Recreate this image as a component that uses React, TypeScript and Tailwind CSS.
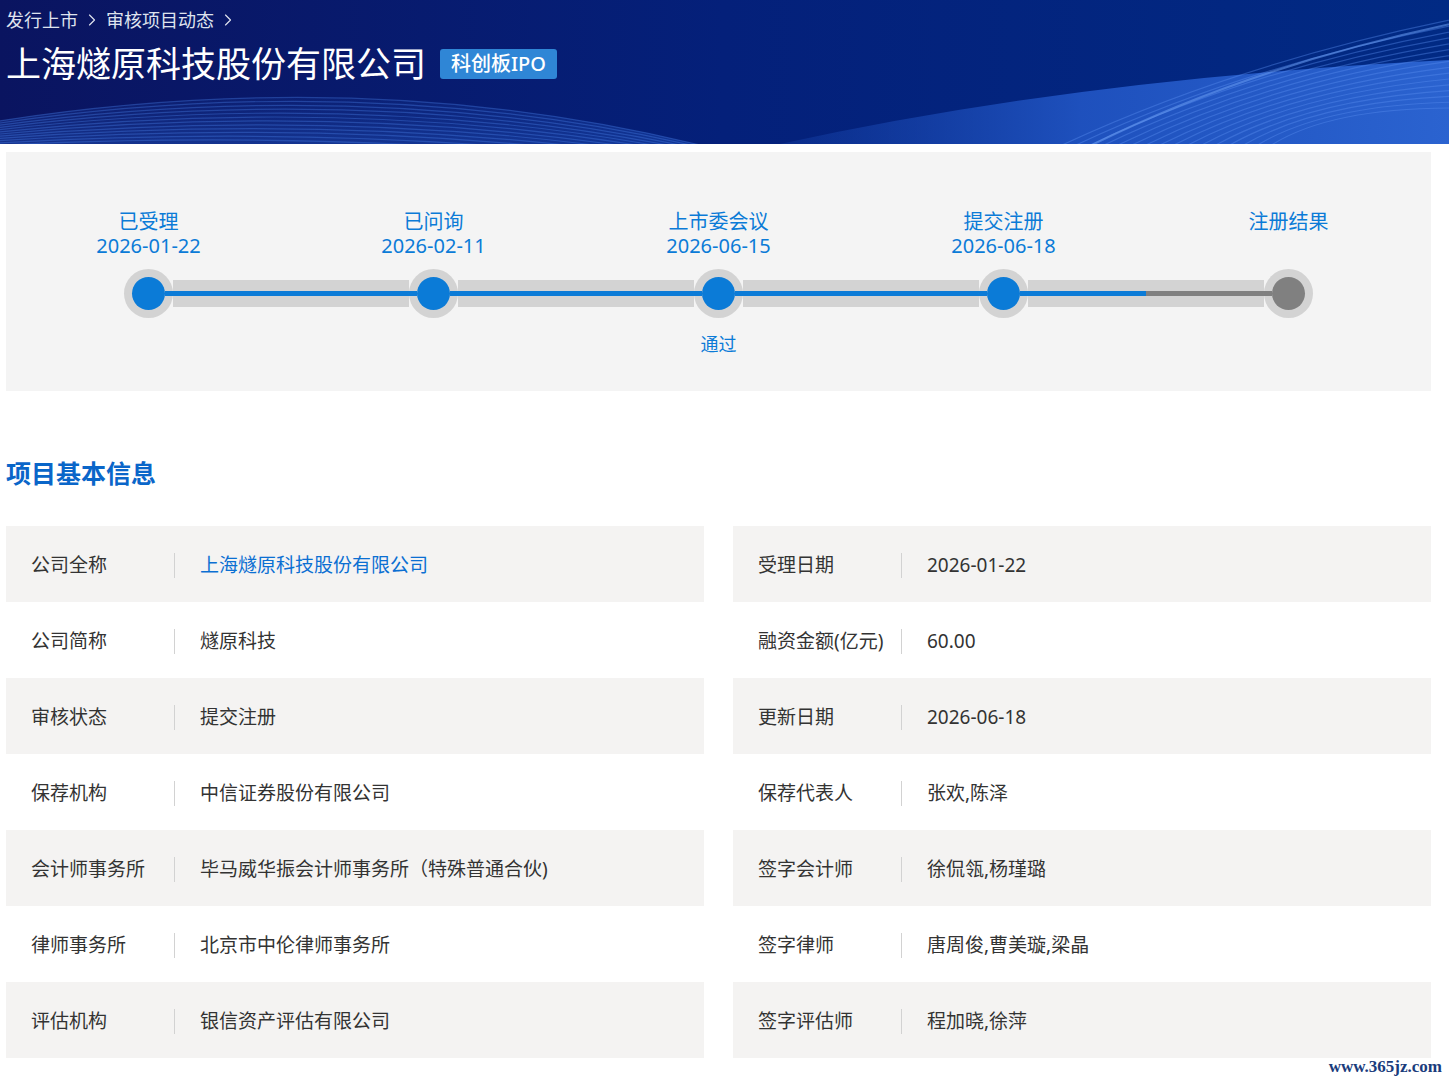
import React from 'react';
import { ChevronRight } from 'lucide-react';

type Step = { name: string; date?: string; note?: string; done: boolean };

const steps: Step[] = [
  { name: '已受理', date: '2026-01-22', done: true },
  { name: '已问询', date: '2026-02-11', done: true },
  { name: '上市委会议', date: '2026-06-15', note: '通过', done: true },
  { name: '提交注册', date: '2026-06-18', done: true },
  { name: '注册结果', done: false },
];

type Cell = { label: string; value: string; link?: boolean };

const rows: [Cell, Cell][] = [
  [
    { label: '公司全称', value: '上海燧原科技股份有限公司', link: true },
    { label: '受理日期', value: '2026-01-22' },
  ],
  [
    { label: '公司简称', value: '燧原科技' },
    { label: '融资金额(亿元)', value: '60.00' },
  ],
  [
    { label: '审核状态', value: '提交注册' },
    { label: '更新日期', value: '2026-06-18' },
  ],
  [
    { label: '保荐机构', value: '中信证券股份有限公司' },
    { label: '保荐代表人', value: '张欢,陈泽' },
  ],
  [
    { label: '会计师事务所', value: '毕马威华振会计师事务所（特殊普通合伙)' },
    { label: '签字会计师', value: '徐侃瓴,杨瑾璐' },
  ],
  [
    { label: '律师事务所', value: '北京市中伦律师事务所' },
    { label: '签字律师', value: '唐周俊,曹美璇,梁晶' },
  ],
  [
    { label: '评估机构', value: '银信资产评估有限公司' },
    { label: '签字评估师', value: '程加晓,徐萍' },
  ],
];

const HeaderWaves = () => {
  const left = Array.from({ length: 12 }, (_, i) => i);
  const right = Array.from({ length: 16 }, (_, i) => i);
  return (
    <svg
      className="absolute inset-0 h-full w-full"
      viewBox="0 0 1449 144"
      preserveAspectRatio="none"
    >
      <defs>
        <linearGradient id="sweep" x1="0" y1="0" x2="1" y2="0">
          <stop offset="0" stopColor="#1c4cb8" stopOpacity="0.25" />
          <stop offset="0.45" stopColor="#2358c8" stopOpacity="0.85" />
          <stop offset="1" stopColor="#2d66d4" stopOpacity="0.95" />
        </linearGradient>
        <linearGradient id="hump" x1="0" y1="0" x2="0" y2="1">
          <stop offset="0" stopColor="#1d46a8" stopOpacity="0.15" />
          <stop offset="1" stopColor="#2150b8" stopOpacity="0.55" />
        </linearGradient>
      </defs>
      <path d="M -20 124 Q 370 60 720 150 L -20 150 Z" fill="url(#hump)" />
      {left.map((i) => (
        <path
          key={`l${i}`}
          d={`M -20 ${124 + i * 2} Q 370 ${60 + i * 6} 720 ${150 + i * 2}`}
          fill="none"
          stroke="#4378de"
          strokeOpacity={0.4}
          strokeWidth={1.2}
        />
      ))}
      <path d="M 780 144 Q 1080 78 1449 60 L 1449 144 Z" fill="url(#sweep)" />
      {right.map((i) => (
        <path
          key={`r${i}`}
          d={`M ${1060 + i * 14} 146 Q ${1240 + i * 6} ${62 + i * 3} 1460 ${18 + i * 6}`}
          fill="none"
          stroke="#5a8ff0"
          strokeOpacity={0.4}
          strokeWidth={1.2}
        />
      ))}
      <path
        d="M 1090 146 Q 1250 66 1460 22"
        fill="none"
        stroke="#6a9df2"
        strokeOpacity={0.55}
        strokeWidth={2}
      />
    </svg>
  );
};

const lineColor = (done: boolean) => (done ? 'bg-[#0b7bd7]' : 'bg-[#808080]');

const Timeline = () => (
  <div className="mx-[6px] mt-2 w-[1425px] bg-[#f4f4f4] pt-[58px] pb-[35px]">
    <div className="grid grid-cols-5">
      {steps.map((s, i) => {
        const first = i === 0;
        const last = i === steps.length - 1;
        return (
          <div key={s.name} className="flex flex-col items-center text-[#0b7bd7]">
            <div className="h-[24px] text-[20px] leading-[24px]">{s.name}</div>
            <div className="h-[24px] text-[20px] leading-[24px]">{s.date}</div>
            <div className="mt-[11px] flex h-[49px] w-full items-center">
              <div className={`flex h-[27px] flex-1 items-center ${first ? '' : 'bg-[#d3d3d3]'}`}>
                {!first && <div className={`h-[5px] w-full ${lineColor(s.done)}`} />}
              </div>
              <div className="flex h-[49px] w-[49px] items-center rounded-full bg-[#d3d3d3]">
                <div className={`h-[5px] flex-1 ${first ? '' : lineColor(s.done)}`} />
                <div className={`h-[33px] w-[33px] shrink-0 rounded-full ${lineColor(s.done)}`} />
                <div className={`h-[5px] flex-1 ${last ? '' : lineColor(s.done)}`} />
              </div>
              <div className={`flex h-[27px] flex-1 items-center ${last ? '' : 'bg-[#d3d3d3]'}`}>
                {!last && <div className={`h-[5px] w-full ${lineColor(s.done)}`} />}
              </div>
            </div>
            <div className="mt-[14px] h-[24px] text-[18px] leading-[24px]">{s.note}</div>
          </div>
        );
      })}
    </div>
  </div>
);

const InfoCell = ({ cell, shaded }: { cell: Cell; shaded: boolean }) => (
  <div className={`flex h-[76px] items-center pt-[3px] ${shaded ? 'bg-[#f4f3f2]' : 'bg-white'}`}>
    <div className="w-[168px] shrink-0 pl-[25px] text-[19px] text-[#333]">{cell.label}</div>
    <div className="h-[25px] w-px bg-[#d2d2d2]" />
    <div className={`pl-[25px] text-[19px] ${cell.link ? 'text-[#0b6fd2]' : 'text-[#333]'}`}>
      {cell.value}
    </div>
  </div>
);

export default function App() {
  return (
    <div className="min-h-[1082px] w-[1449px] overflow-hidden bg-white font-['Noto_Sans','Noto_Sans_CJK_SC',sans-serif]">
      <div className="relative h-[144px] overflow-hidden bg-gradient-to-r from-[#0a1460] via-[#04207a] to-[#012a84]">
        <HeaderWaves />
        <div className="relative px-[6px]">
          <div className="flex h-[40px] items-center gap-[4px] text-[18px] text-[#dfe3ee]">
            <span>发行上市</span>
            <ChevronRight size={20} strokeWidth={1.4} />
            <span>审核项目动态</span>
            <ChevronRight size={20} strokeWidth={1.4} />
          </div>
          <div className="mt-[2px] flex items-center">
            <h1 className="text-[35px] leading-[44px] text-white">上海燧原科技股份有限公司</h1>
            <span className="ml-[14px] flex h-[30px] items-center rounded-[3px] bg-[#2f86d6] px-[11px] text-[20px] font-medium text-white">
              科创板IPO
            </span>
          </div>
        </div>
      </div>

      <Timeline />

      <h2 className="mt-[66px] px-[6px] text-[25px] font-bold leading-[32px] text-[#0a66c9]">
        项目基本信息
      </h2>

      <div className="mx-[6px] mt-[37px] flex w-[1425px] flex-col">
        {rows.map(([l, r], i) => (
          <div key={l.label} className="grid grid-cols-2 gap-[29px]">
            <InfoCell cell={l} shaded={i % 2 === 0} />
            <InfoCell cell={r} shaded={i % 2 === 0} />
          </div>
        ))}
      </div>

      <div className="flex justify-end pr-[7px] font-['Liberation_Serif',serif] text-[17px] font-bold leading-[18px] text-[#1a3c7c]">
        www.365jz.com
      </div>
    </div>
  );
}
